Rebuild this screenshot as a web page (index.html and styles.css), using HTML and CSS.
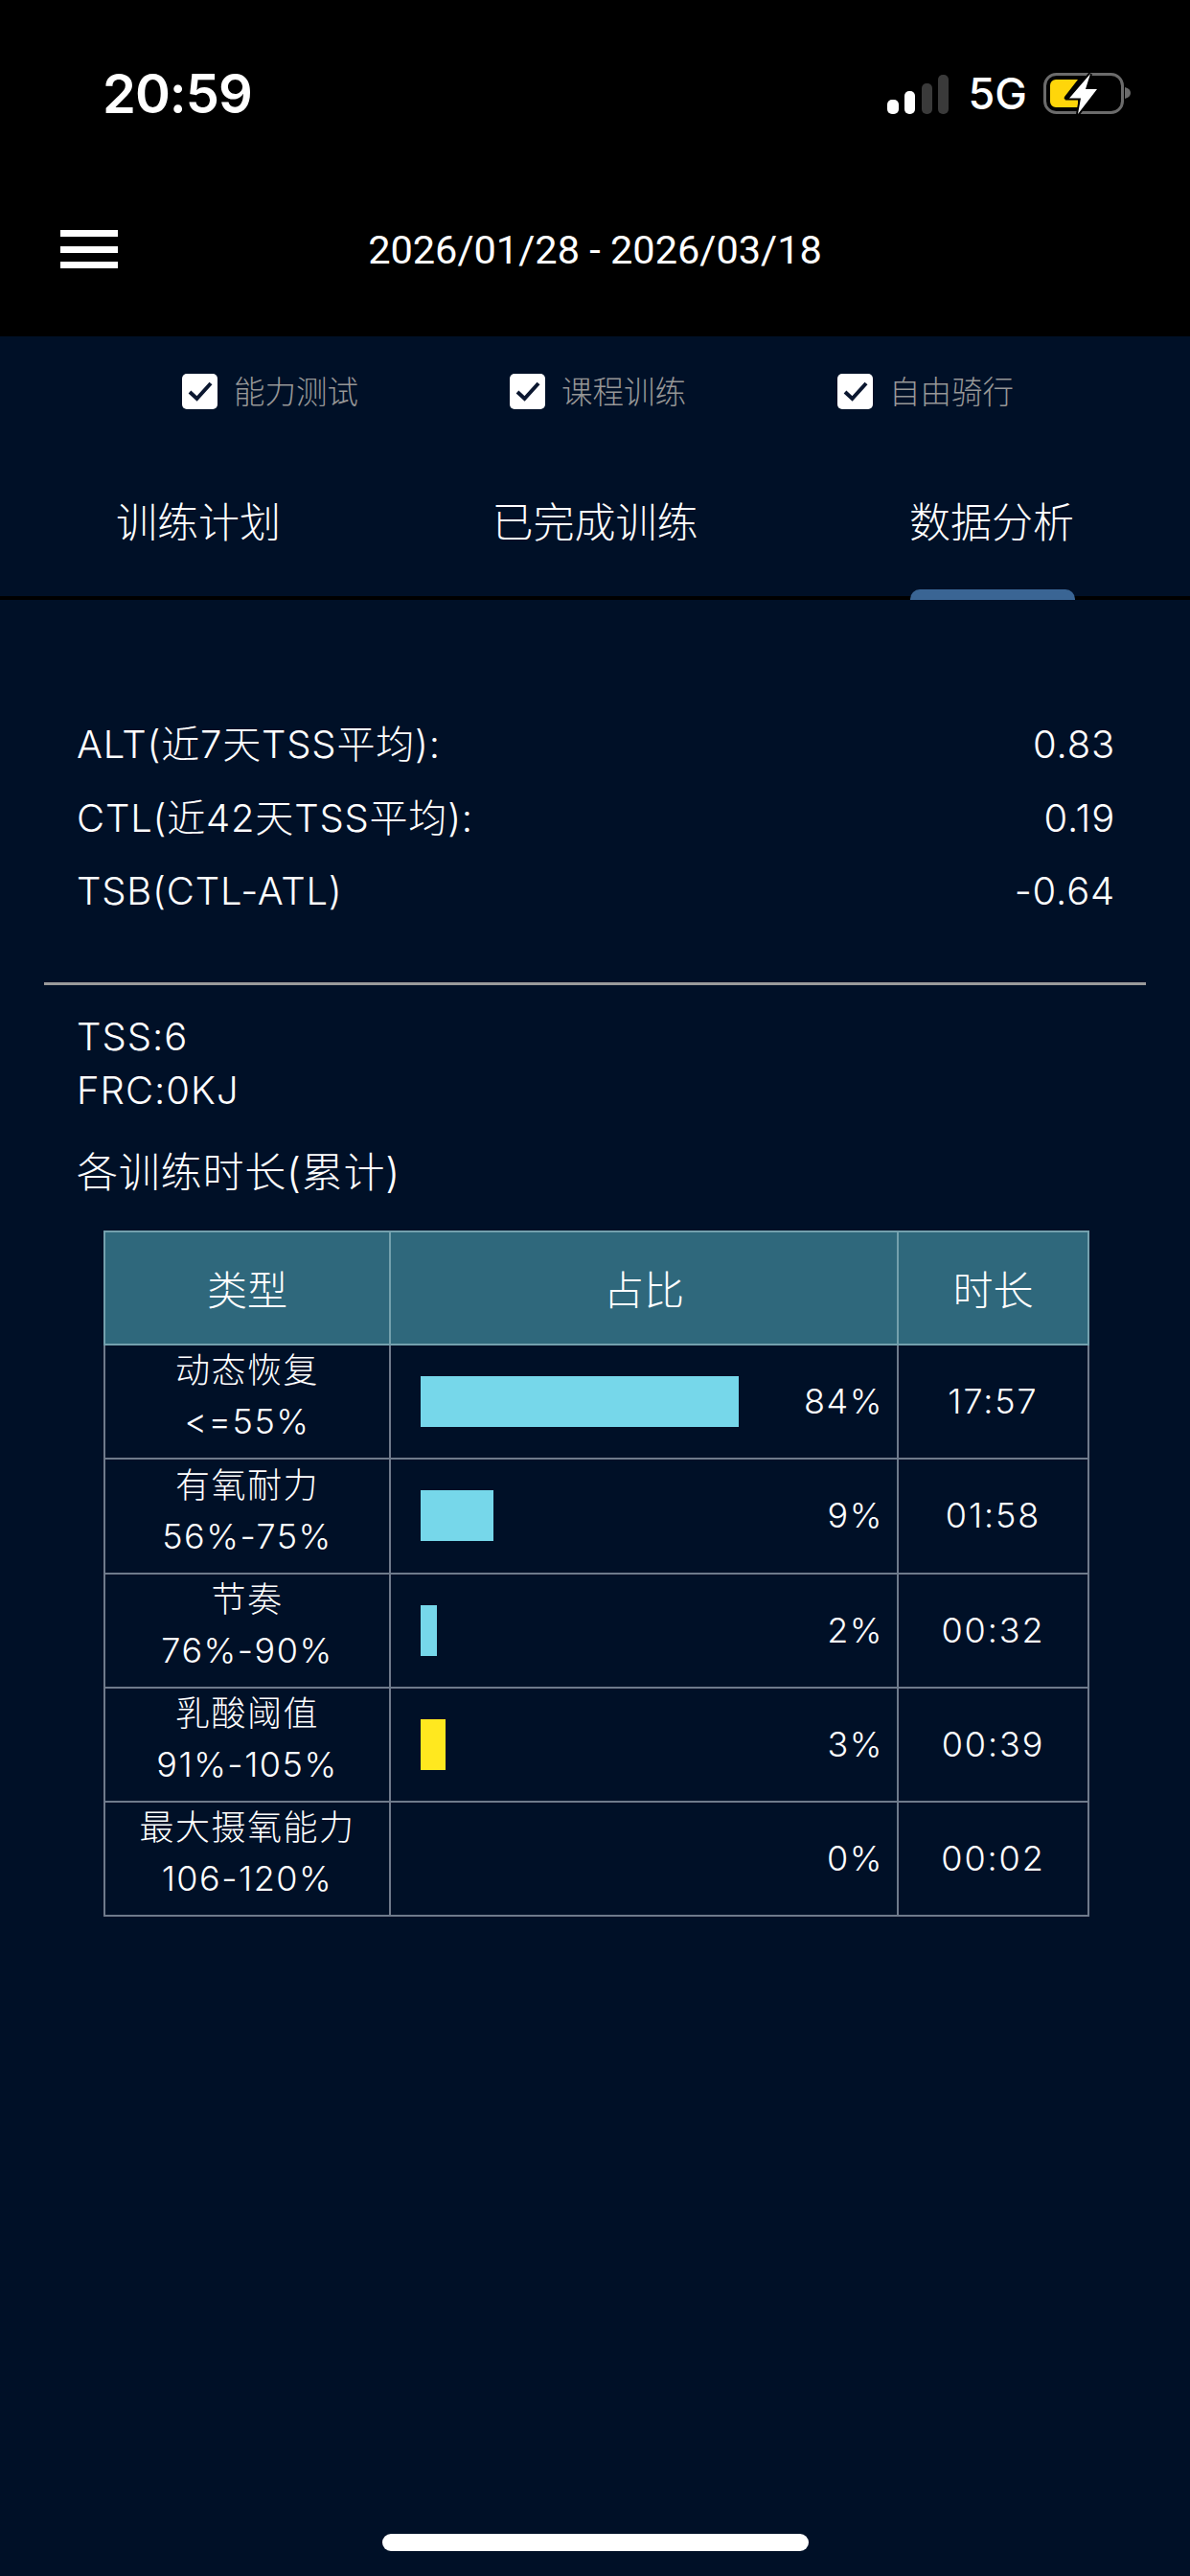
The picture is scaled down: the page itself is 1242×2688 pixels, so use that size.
FILE: index.html
```html
<!DOCTYPE html>
<html lang="zh-CN">
<head>
<meta charset="utf-8">
<title>数据分析</title>
<link rel="stylesheet" href="styles.css">
</head>
<body>
<div class="page">
  <header class="top">
    <div class="status">
      <span class="clock">20:59</span>
      <div class="status-icons">
        <svg class="signal" width="64" height="41" viewBox="0 0 64 41">
          <rect x="0" y="26" width="12" height="15" rx="5" fill="#fff"/>
          <rect x="18" y="17" width="11" height="24" rx="5" fill="#fff"/>
          <rect x="36" y="9" width="11" height="32" rx="5" fill="#3a3a3a"/>
          <rect x="53" y="0" width="11" height="41" rx="5" fill="#3a3a3a"/>
        </svg>
        <span class="net">5G</span>
        <svg class="battery" width="92" height="46" viewBox="0 0 92 46">
          <rect x="1.5" y="2.500" width="81" height="40" rx="12" fill="none" stroke="#6b6b6b" stroke-width="3"/>
          <path d="M85 16c4 1 6 3 6 6s-2 5-6 6z" fill="#6b6b6b"/>
          <path d="M13 8h23L22 26c-1 2 0 3 2 3h12v8H13a6 6 0 0 1-6-6V14a6 6 0 0 1 6-6z" fill="#ffd60a"/>
          <path class="bolt" d="M49 2L27 27.500h12L36 44l20-26H44z"/>
        </svg>
      </div>
    </div>
    <nav class="nav">
      <div class="menu"><i></i><i></i><i></i></div>
      <div class="range">2026/01/28 - 2026/03/18</div>
    </nav>
  </header>

  <div class="filters">
    <label class="filter"><span class="box"><svg width="28" height="24" viewBox="0 0 28 24"><path d="M3 13l7.500 7L25 4" fill="none" stroke="#0b1730" stroke-width="4"/></svg></span><span class="filter-text">能力测试</span></label>
    <label class="filter"><span class="box"><svg width="28" height="24" viewBox="0 0 28 24"><path d="M3 13l7.500 7L25 4" fill="none" stroke="#0b1730" stroke-width="4"/></svg></span><span class="filter-text">课程训练</span></label>
    <label class="filter"><span class="box"><svg width="28" height="24" viewBox="0 0 28 24"><path d="M3 13l7.500 7L25 4" fill="none" stroke="#0b1730" stroke-width="4"/></svg></span><span class="filter-text">自由骑行</span></label>
  </div>

  <div class="tabs">
    <div class="tab">训练计划</div>
    <div class="tab">已完成训练</div>
    <div class="tab active">数据分析</div>
  </div>

  <section class="metrics">
    <div class="metric"><span>ALT(近7天TSS平均):</span><span>0.83</span></div>
    <div class="metric"><span>CTL(近42天TSS平均):</span><span>0.19</span></div>
    <div class="metric"><span>TSB(CTL-ATL)</span><span>-0.64</span></div>
  </section>

  <hr class="divider">

  <section class="stats">
    <div class="stat">TSS:6</div>
    <div class="stat">FRC:0KJ</div>
    <h2 class="stats-title">各训练时长(累计)</h2>
  </section>

  <table class="zones">
    <colgroup><col class="col-type"><col class="col-share"><col class="col-time"></colgroup>
    <thead>
      <tr><th>类型</th><th>占比</th><th>时长</th></tr>
    </thead>
    <tbody>
      <tr>
        <td class="zone">动态恢复<br>&lt;=55%</td>
        <td><div class="share"><div class="bar" style="width:332px"></div><span class="pct">84%</span></div></td>
        <td class="time">17:57</td>
      </tr>
      <tr>
        <td class="zone">有氧耐力<br>56%-75%</td>
        <td><div class="share"><div class="bar" style="width:76px"></div><span class="pct">9%</span></div></td>
        <td class="time">01:58</td>
      </tr>
      <tr>
        <td class="zone">节奏<br>76%-90%</td>
        <td><div class="share"><div class="bar" style="width:17px"></div><span class="pct">2%</span></div></td>
        <td class="time">00:32</td>
      </tr>
      <tr>
        <td class="zone">乳酸阈值<br>91%-105%</td>
        <td><div class="share"><div class="bar yellow" style="width:26px"></div><span class="pct">3%</span></div></td>
        <td class="time">00:39</td>
      </tr>
      <tr>
        <td class="zone">最大摄氧能力<br>106-120%</td>
        <td><div class="share"><span class="pct">0%</span></div></td>
        <td class="time">00:02</td>
      </tr>
    </tbody>
  </table>

  <div class="home"></div>
</div>
</body>
</html>
```
FILE: styles.css
```css
* { box-sizing: border-box; }
html, body { margin: 0; padding: 0; }
body {
  background: #001027;
  color: #fff;
  font-family: "Inter", "Noto Sans CJK SC", sans-serif;
}
.page {
  width: 1242px;
  height: 2688px;
  display: flex;
  flex-direction: column;
  overflow: hidden;
}
.top { background: #000; height: 351px; }
.status {
  height: 196px;
  display: flex;
  align-items: center;
  justify-content: space-between;
  padding: 0 61px 0 107px;
}
.clock { font-size: 56px; font-weight: 600; letter-spacing: -1px; }
.status-icons { display: flex; align-items: center; }
.signal { margin-right: 21px; }
.net { font-size: 45px; font-weight: 500; margin-right: 17px; line-height: 46px; }
.bolt { fill: #fff; stroke: #000; stroke-width: 4px; paint-order: stroke; }
.nav {
  height: 128px;
  display: grid;
  grid-template-columns: 1fr auto 1fr;
  align-items: center;
  padding-left: 63px;
}
.menu { display: flex; flex-direction: column; gap: 9.5px; width: 60px; }
.menu i { display: block; height: 7px; background: #fff; }
.range {
  font-family: "Roboto", "Noto Sans CJK SC", sans-serif;
  font-size: 41.5px;
  font-weight: 400;
  margin-left: -63px;
}
.filters {
  height: 114px;
  display: flex;
  align-items: center;
  gap: 158px;
  padding-left: 190px;
}
.filter {
  display: flex;
  align-items: center;
  gap: 17px;
  font-size: 32.5px;
  color: #979797;
  font-weight: 300;
}
.filter-text { margin-top: -3px; }
.box {
  width: 37px;
  height: 37px;
  background: #fff;
  border-radius: 5px;
  display: flex;
  align-items: center;
  justify-content: center;
}
.tabs {
  display: grid;
  grid-template-columns: repeat(3, 1fr);
  border-bottom: 4px solid #000;
  height: 161px;
}
.tab {
  position: relative;
  display: flex;
  align-items: center;
  justify-content: center;
  font-size: 43px;
  font-weight: 300;
  padding-bottom: 3px;
}
.tab.active::after {
  content: "";
  position: absolute;
  left: 122px;
  width: 172px;
  height: 11px;
  bottom: -4px;
  background: #3a6594;
  border-radius: 10px 10px 0 0;
}
.metrics { padding: 113px 78px 0 80px; }
.metric {
  height: 76.5px;
  display: flex;
  align-items: baseline;
  justify-content: space-between;
  font-size: 40px;
  line-height: 76px;
  letter-spacing: 0.8px;
  font-weight: 300;
}
.divider {
  border: 0;
  height: 3px;
  background: #9a9a9a;
  margin: 56px 46px 0;
}
.stats { padding: 26px 80px 0; }
.stat { font-size: 40px; letter-spacing: 1px; line-height: 56px; font-weight: 300; }
.stats-title {
  margin: 27px 0 0;
  font-size: 43px;
  letter-spacing: 0.8px;
  line-height: 60px;
  font-weight: 300;
}
.zones {
  margin: 31px 0 0 108px;
  width: 1027px;
  table-layout: fixed;
  border-collapse: collapse;
  font-weight: 300;
}
.col-type { width: 298px; }
.col-share { width: 530px; }
.col-time { width: 199px; }
.zones th, .zones td {
  border: 2px solid #6f7a8b;
  padding: 0;
  text-align: center;
}
.zones th {
  background: #2f687c;
  height: 118px;
  font-size: 42px;
  font-weight: 300;
  border-color: #74a0ad;
}
.zones td {
  height: 119px;
  font-size: 36px;
  letter-spacing: 1.5px;
  line-height: 53px;
}
.zones tbody tr:nth-child(2) td { height: 120px; }
.zones .zone { padding-bottom: 10px; }
.zones .time { letter-spacing: 1.9px; }
.share {
  display: flex;
  align-items: center;
  justify-content: space-between;
  padding: 0 14px 0 31px;
}
.bar { height: 53px; background: #76d7ea; }
.bar.yellow { background: #ffe81f; }
.pct { margin-left: auto; }
.home {
  margin: auto auto 26px;
  width: 445px;
  height: 18px;
  border-radius: 9px;
  background: #fff;
}
```
